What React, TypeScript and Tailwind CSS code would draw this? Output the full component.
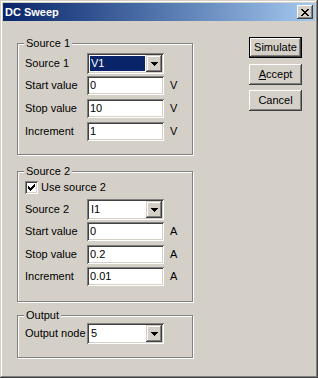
import React from "react";

const raisedFrame =
  "shadow-[inset_-1px_-1px_#404040,inset_1px_1px_#d4d0c8,inset_-2px_-2px_#808080,inset_2px_2px_#ffffff]";
const raisedBtn =
  "shadow-[inset_-1px_-1px_#404040,inset_1px_1px_#ffffff,inset_-2px_-2px_#808080,inset_2px_2px_#d4d0c8]";
const sunken =
  "shadow-[inset_1px_1px_#808080,inset_-1px_-1px_#ffffff,inset_2px_2px_#404040,inset_-2px_-2px_#d4d0c8]";

function Pixels({ rows, w, h }: { rows: string[]; w: number; h: number }) {
  const rects: React.ReactElement[] = [];
  rows.forEach((r, y) => {
    for (let x = 0; x < r.length; x++) {
      if (r[x] === "x") rects.push(<rect key={`${x}-${y}`} x={x} y={y} width={1} height={1} fill="#000" />);
    }
  });
  return (
    <svg width={w} height={h} viewBox={`0 0 ${w} ${h}`} shapeRendering="crispEdges">
      {rects}
    </svg>
  );
}

const closeX = ["xx....xx", ".xx..xx.", "..xxxx..", "...xx...", "..xxxx..", ".xx..xx.", "xx....xx"];
const arrow = ["xxxxxxx", ".xxxxx.", "..xxx..", "...x..."];
const check = ["......x", ".....xx", "x...xxx", "xx.xxx.", "xxxxx..", ".xxx...", "..x...."];

function Combo({ value, selected }: { value: string; selected?: boolean }) {
  return (
    <div className={`w-[77px] h-[21px] bg-white ${sunken} flex p-[2px]`}>
      <div className="flex-1 flex p-[1px]">
        <div className={`flex-1 flex items-center pl-[1px] ${selected ? "bg-[#0a246a] text-white" : ""}`}>{value}</div>
      </div>
      <div className={`w-[16px] h-[17px] bg-[#d4d0c8] ${raisedFrame} flex items-center justify-center`}>
        <Pixels rows={arrow} w={7} h={4} />
      </div>
    </div>
  );
}

function Field({ value }: { value: string }) {
  return (
    <div className={`w-[77px] h-[19px] bg-white ${sunken} flex items-center pl-[3px]`}>{value}</div>
  );
}

function Row({ label, children, unit, className }: { label: string; children: React.ReactNode; unit?: string; className?: string }) {
  return (
    <div className={`flex items-center ${className ?? ""}`}>
      <div className="w-[62px]">{label}</div>
      {children}
      {unit && <div className="ml-[6px]">{unit}</div>}
    </div>
  );
}

function Group({ title, className, children }: { title: string; className?: string; children: React.ReactNode }) {
  return (
    <div
      className={`relative w-[176px] border border-[#808080] shadow-[inset_1px_1px_#ffffff,1px_1px_#ffffff] pl-[7px] ${className ?? ""}`}
    >
      <span className="absolute -top-[7px] left-[6px] px-[2px] bg-[#d4d0c8] leading-[13px]">{title}</span>
      {children}
    </div>
  );
}

function Button({ children, isDefault, className }: { children: React.ReactNode; isDefault?: boolean; className?: string }) {
  return (
    <div className={`w-[53px] h-[21px] ${isDefault ? "border border-black" : ""} ${className ?? ""}`}>
      <div className={`w-full h-full bg-[#d4d0c8] ${raisedBtn} flex items-center justify-center`}>{children}</div>
    </div>
  );
}

export default function App() {
  return (
    <div
      className={`w-[318px] h-[378px] bg-[#d4d0c8] p-[3px] ${raisedFrame} font-['Liberation_Sans',Arial,sans-serif] text-[11px] leading-[13px] text-black select-none`}
    >
      <div className="h-[18px] flex items-center justify-between bg-gradient-to-r from-[#0a246a] to-[#a6caf0] pl-[2px] pr-[2px]">
        <span className="text-white font-bold text-[11px]">DC Sweep</span>
        <div className={`w-[16px] h-[14px] bg-[#d4d0c8] ${raisedBtn} flex items-center justify-center`}>
          <Pixels rows={closeX} w={8} h={7} />
        </div>
      </div>
      <div className="flex pl-[14px]">
        <div className="flex flex-col">
          <Group title="Source 1" className="mt-[22px] h-[112px]">
            <Row label="Source 1" className="mt-[9px]">
              <Combo value="V1" selected />
            </Row>
            <Row label="Start value" unit="V" className="mt-[2px]">
              <Field value="0" />
            </Row>
            <Row label="Stop value" unit="V" className="mt-[4px]">
              <Field value="10" />
            </Row>
            <Row label="Increment" unit="V" className="mt-[4px]">
              <Field value="1" />
            </Row>
          </Group>
          <Group title="Source 2" className="mt-[16px] h-[131px]">
            <div className="flex items-center mt-[9px]">
              <div className={`w-[13px] h-[13px] bg-white ${sunken} flex items-center justify-center`}>
                <Pixels rows={check} w={7} h={7} />
              </div>
              <span className="ml-[3px]">Use source 2</span>
            </div>
            <Row label="Source 2" className="mt-[5px]">
              <Combo value="I1" />
            </Row>
            <Row label="Start value" unit="A" className="mt-[2px]">
              <Field value="0" />
            </Row>
            <Row label="Stop value" unit="A" className="mt-[4px]">
              <Field value="0.2" />
            </Row>
            <Row label="Increment" unit="A" className="mt-[3px]">
              <Field value="0.01" />
            </Row>
          </Group>
          <Group title="Output" className="mt-[13px] h-[43px]">
            <Row label="Output node" className="mt-[7px]">
              <Combo value="5" />
            </Row>
          </Group>
        </div>
        <div className="ml-[56px] mt-[16px] flex flex-col">
          <Button isDefault>Simulate</Button>
          <Button className="mt-[6px]">
            <span>
              <span className="underline">A</span>ccept
            </span>
          </Button>
          <Button className="mt-[5px]">Cancel</Button>
        </div>
      </div>
    </div>
  );
}
